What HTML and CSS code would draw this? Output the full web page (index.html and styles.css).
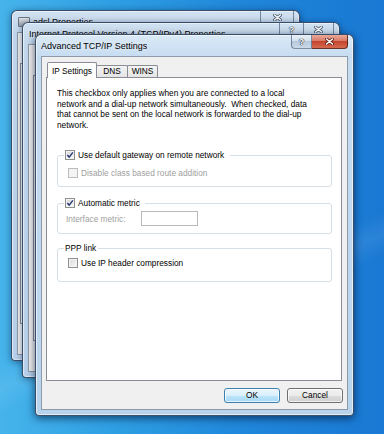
FILE: index.html
```html
<!DOCTYPE html>
<html lang="en">
<head>
    <meta charset="UTF-8">
    <meta name="viewport" content="width=device-width, initial-scale=1.0">
    <title>Advanced TCP/IP Settings</title>
    <link rel="stylesheet" href="styles.css">
</head>
<body>

<div class="desktop">

    <!-- adsl Properties (furthest back) -->
    <div class="window inactive win-adsl">
        <div class="titlebar">
            <span class="app-icon"></span>
            <span class="title">adsl Properties</span>
            <div class="caption">
                <span class="cap-btn close-btn">
                    <svg width="9" height="7" viewBox="0 0 9 7"><path d="M1.5 1 L7.5 6 M7.5 1 L1.5 6" stroke="#4a5a6c" stroke-width="3" stroke-linecap="round"/><path d="M1.5 1 L7.5 6 M7.5 1 L1.5 6" stroke="#fff" stroke-width="1.6" stroke-linecap="round"/></svg>
                </span>
            </div>
        </div>
        <div class="client"><div class="sheet"></div></div>
    </div>

    <!-- Internet Protocol Version 4 Properties -->
    <div class="window inactive win-ipv4">
        <div class="titlebar">
            <span class="title">Internet Protocol Version 4 (TCP/IPv4) Properties</span>
            <div class="caption">
                <span class="cap-btn help-btn">?</span>
                <span class="cap-btn close-btn">
                    <svg width="9" height="7" viewBox="0 0 9 7"><path d="M1.5 1 L7.5 6 M7.5 1 L1.5 6" stroke="#4a5a6c" stroke-width="3" stroke-linecap="round"/><path d="M1.5 1 L7.5 6 M7.5 1 L1.5 6" stroke="#fff" stroke-width="1.6" stroke-linecap="round"/></svg>
                </span>
            </div>
        </div>
        <div class="client"><div class="sheet"></div></div>
    </div>

    <!-- Advanced TCP/IP Settings (active) -->
    <div class="window active win-adv">
        <div class="titlebar">
            <span class="title">Advanced TCP/IP Settings</span>
            <div class="caption">
                <span class="cap-btn help-btn">?</span>
                <span class="cap-btn close-btn">
                    <svg width="9" height="7" viewBox="0 0 9 7"><path d="M1.5 1 L7.5 6 M7.5 1 L1.5 6" stroke="#5a1a10" stroke-width="3" stroke-linecap="round"/><path d="M1.5 1 L7.5 6 M7.5 1 L1.5 6" stroke="#fff" stroke-width="1.6" stroke-linecap="round"/></svg>
                </span>
            </div>
        </div>

        <div class="client dialog">
            <div class="tabs">
                <span class="tab tab-ip selected">IP Settings</span>
                <span class="tab tab-dns">DNS</span>
                <span class="tab tab-wins">WINS</span>
            </div>

            <div class="tab-panel">
                <p class="note">This checkbox only applies when you are connected to a local<br>network and a dial-up network simultaneously.&nbsp; When checked, data<br>that cannot be sent on the local network is forwarded to the dial-up<br>network.</p>

                <fieldset class="group group-gateway">
                    <legend>
                        <span class="check">
                            <span class="cb"><svg width="8" height="8" viewBox="0 0 8 8"><path d="M1.3 4 L3.2 6.1 L6.9 1.4" fill="none" stroke="#2a3b78" stroke-width="1.5"/></svg></span>
                            Use default gateway on remote network
                        </span>
                    </legend>
                    <div class="check sub disabled">
                        <span class="cb"></span>
                        Disable class based route addition
                    </div>
                </fieldset>

                <fieldset class="group group-metric">
                    <legend>
                        <span class="check">
                            <span class="cb"><svg width="8" height="8" viewBox="0 0 8 8"><path d="M1.3 4 L3.2 6.1 L6.9 1.4" fill="none" stroke="#2a3b78" stroke-width="1.5"/></svg></span>
                            Automatic metric
                        </span>
                    </legend>
                    <div class="metric-row disabled">
                        <span class="field-label">Interface metric:</span>
                        <span class="metric-input"></span>
                    </div>
                </fieldset>

                <fieldset class="group group-ppp">
                    <legend>PPP link</legend>
                    <div class="check sub">
                        <span class="cb"></span>
                        Use IP header compression
                    </div>
                </fieldset>
            </div>

            <div class="buttons">
                <button class="btn btn-default">OK</button>
                <button class="btn">Cancel</button>
            </div>
        </div>
    </div>

</div>

</body>
</html>
```

FILE: styles.css
```css
body {
    margin: 0;
    font-family: 'Liberation Sans', Arial, sans-serif;
    font-size: 8.3px;
    color: #000;
    background: #1f85d9;
}

.desktop {
    position: relative;
    width: 384px;
    height: 434px;
    overflow: hidden;
    background:
        linear-gradient(158deg, transparent 62%, rgba(255, 255, 255, 0.08) 66%, transparent 70%),
        linear-gradient(90deg, #46b4eb 0%, #2e9ee3 30%, #2087da 62%, #1978d3 100%);
}

/* windows */
.window {
    position: absolute;
    box-sizing: border-box;
    display: flex;
    flex-direction: column;
    padding: 0 5px 5px;
    border: 1px solid rgba(24, 44, 72, 0.8);
    border-radius: 6px 6px 4px 4px;
    box-shadow: inset 0 0 0 1px rgba(255, 255, 255, 0.5), 0 1px 7px rgba(0, 16, 48, 0.45);
}
.inactive {
    background: linear-gradient(180deg, #d0e1f1 0, #c2d7ec 24px, #b8d0e9 100%);
}
.active {
    background: linear-gradient(180deg, #dbe9f6 0, #c6dcf1 22px, #b9d3ec 100%);
    box-shadow: inset 0 0 0 1px rgba(255, 255, 255, 0.6), 0 2px 9px rgba(0, 12, 40, 0.65);
}
.win-adsl { left: 11px; top: 10px; width: 289px; height: 351px; }
.win-ipv4 { left: 22px; top: 22px; width: 318px; height: 356px; }
.win-adv { left: 35px; top: 34px; width: 319px; height: 382px; }

.titlebar {
    display: flex;
    align-items: center;
    height: 21px;
    flex: none;
}
.title {
    font-size: 9px;
    white-space: nowrap;
    overflow: hidden;
    text-shadow: 0 0 6px #fff;
}
.win-ipv4 .title {
    padding-left: 1px;
}
.app-icon {
    flex: none;
    width: 10px;
    height: 8px;
    margin: 0 3px 0 1px;
    border: 1px solid #6b737c;
    border-radius: 1px;
    background: linear-gradient(#dfe3e8, #98a2ad);
}

/* caption buttons */
.caption {
    display: flex;
    align-self: flex-start;
    margin-left: auto;
}
.cap-btn {
    display: flex;
    align-items: center;
    justify-content: center;
    box-sizing: border-box;
    height: 14px;
    border: 1px solid rgba(40, 62, 92, 0.55);
    border-top: none;
    color: #fff;
    font-weight: bold;
    font-size: 9px;
}
.cap-btn + .cap-btn {
    border-left: none;
}
.caption .cap-btn:first-child {
    border-bottom-left-radius: 4px;
}
.caption .cap-btn:last-child {
    border-bottom-right-radius: 4px;
}
.help-btn {
    width: 25px;
    text-shadow: 0 0 1px #2a3340, 0 0 1px #2a3340, 0 0 1px #2a3340;
}
.inactive .close-btn {
    width: 30px;
}
.win-adsl .close-btn {
    width: 34px;
}
.active .help-btn {
    width: 21px;
    background: linear-gradient(#eaf1f8, #d3e0ec 45%, #b6c9dc 50%, #cbd9e7);
}
.active .close-btn {
    width: 36px;
    border-color: rgba(70, 24, 16, 0.8);
    background: linear-gradient(#eaa99b, #d77b67 45%, #c4452c 50%, #d56a50);
}

/* client areas */
.client {
    flex: 1;
    display: flex;
    flex-direction: column;
    background: #f0f0f0;
    border: 1px solid rgba(58, 84, 112, 0.55);
}
.sheet {
    flex: 1;
    margin: 30px 4px 30px 2px;
    background: #fff;
    border: 1px solid #898c95;
}
.win-ipv4 .sheet {
    margin-left: 4px;
}

/* dialog */
.dialog {
    padding: 5px 5px 6px 4px;
}
.tabs {
    display: flex;
    align-items: flex-end;
    flex: none;
    height: 15px;
    padding-left: 1px;
}
.tab {
    box-sizing: border-box;
    height: 12px;
    line-height: 11px;
    text-align: center;
    border: 1px solid #898c95;
    border-bottom: none;
    border-radius: 2px 2px 0 0;
    background: linear-gradient(#f4f4f4, #e4e4e4);
}
.tab + .tab {
    margin-left: -1px;
}
.tab.selected {
    position: relative;
    z-index: 1;
    height: 16px;
    margin-bottom: -1px;
    padding-top: 3px;
    background: #fff;
}
.tab-ip { width: 50px; }
.tab-dns { width: 32px; }
.tab-wins { width: 31px; }

.tab-panel {
    flex: 1;
    background: #fff;
    border: 1px solid #898c95;
    padding: 10px 9px 0 10px;
}
.note {
    margin: 0;
    line-height: 10.5px;
}

.group {
    margin: 0;
    padding: 0;
    min-width: 0;
    border: 1px solid #d5dfe5;
    border-radius: 3px;
}
.group legend {
    margin-left: 6px;
    padding: 0 6px 0 1px;
    line-height: 10px;
}
.group-gateway {
    margin-top: 20px;
    padding: 8px 0 8px;
}
.group-metric {
    margin-top: 11px;
    padding: 3px 0 7px;
}
.group-metric legend {
    padding-right: 5px;
}
.group-ppp {
    margin-top: 9px;
    padding: 5px 0 13px;
}
.group-ppp legend {
    padding-right: 2px;
}

.check {
    display: flex;
    align-items: center;
    gap: 3px;
    line-height: 10px;
}
.sub {
    margin-left: 10px;
}
.disabled {
    color: #a0a0a0;
}
.cb {
    display: flex;
    align-items: center;
    justify-content: center;
    flex: none;
    box-sizing: border-box;
    width: 10px;
    height: 10px;
    border: 1px solid #8e8f8f;
    background: linear-gradient(135deg, #d8d8d8, #fbfbfb);
    box-shadow: inset 0 0 0 1px #f4f4f4;
}
.disabled .cb {
    border-color: #bcbcbc;
    background: #f4f4f4;
    box-shadow: none;
}

.metric-row {
    display: flex;
    align-items: center;
    margin-left: 8px;
}
.field-label {
    width: 75px;
}
.metric-input {
    box-sizing: border-box;
    width: 57px;
    height: 15px;
    border: 1px solid #b9b9b9;
    background: #fff;
}

.buttons {
    display: flex;
    justify-content: flex-end;
    gap: 7px;
    flex: none;
    margin: 7px -1px 0 0;
}
.btn {
    box-sizing: border-box;
    width: 56px;
    height: 15px;
    padding: 0;
    font: inherit;
    line-height: 13px;
    color: #000;
    border: 1px solid #707070;
    border-radius: 3px;
    background: linear-gradient(#f2f2f2, #ebebeb 50%, #dddddd 50%, #cfcfcf);
    box-shadow: inset 0 0 0 1px rgba(255, 255, 255, 0.7);
}
.btn-default {
    border-color: #3c7fb1;
    background: linear-gradient(#eaf6fd, #d9f0fc 50%, #bee6fd 50%, #a7d9f5);
}
```
